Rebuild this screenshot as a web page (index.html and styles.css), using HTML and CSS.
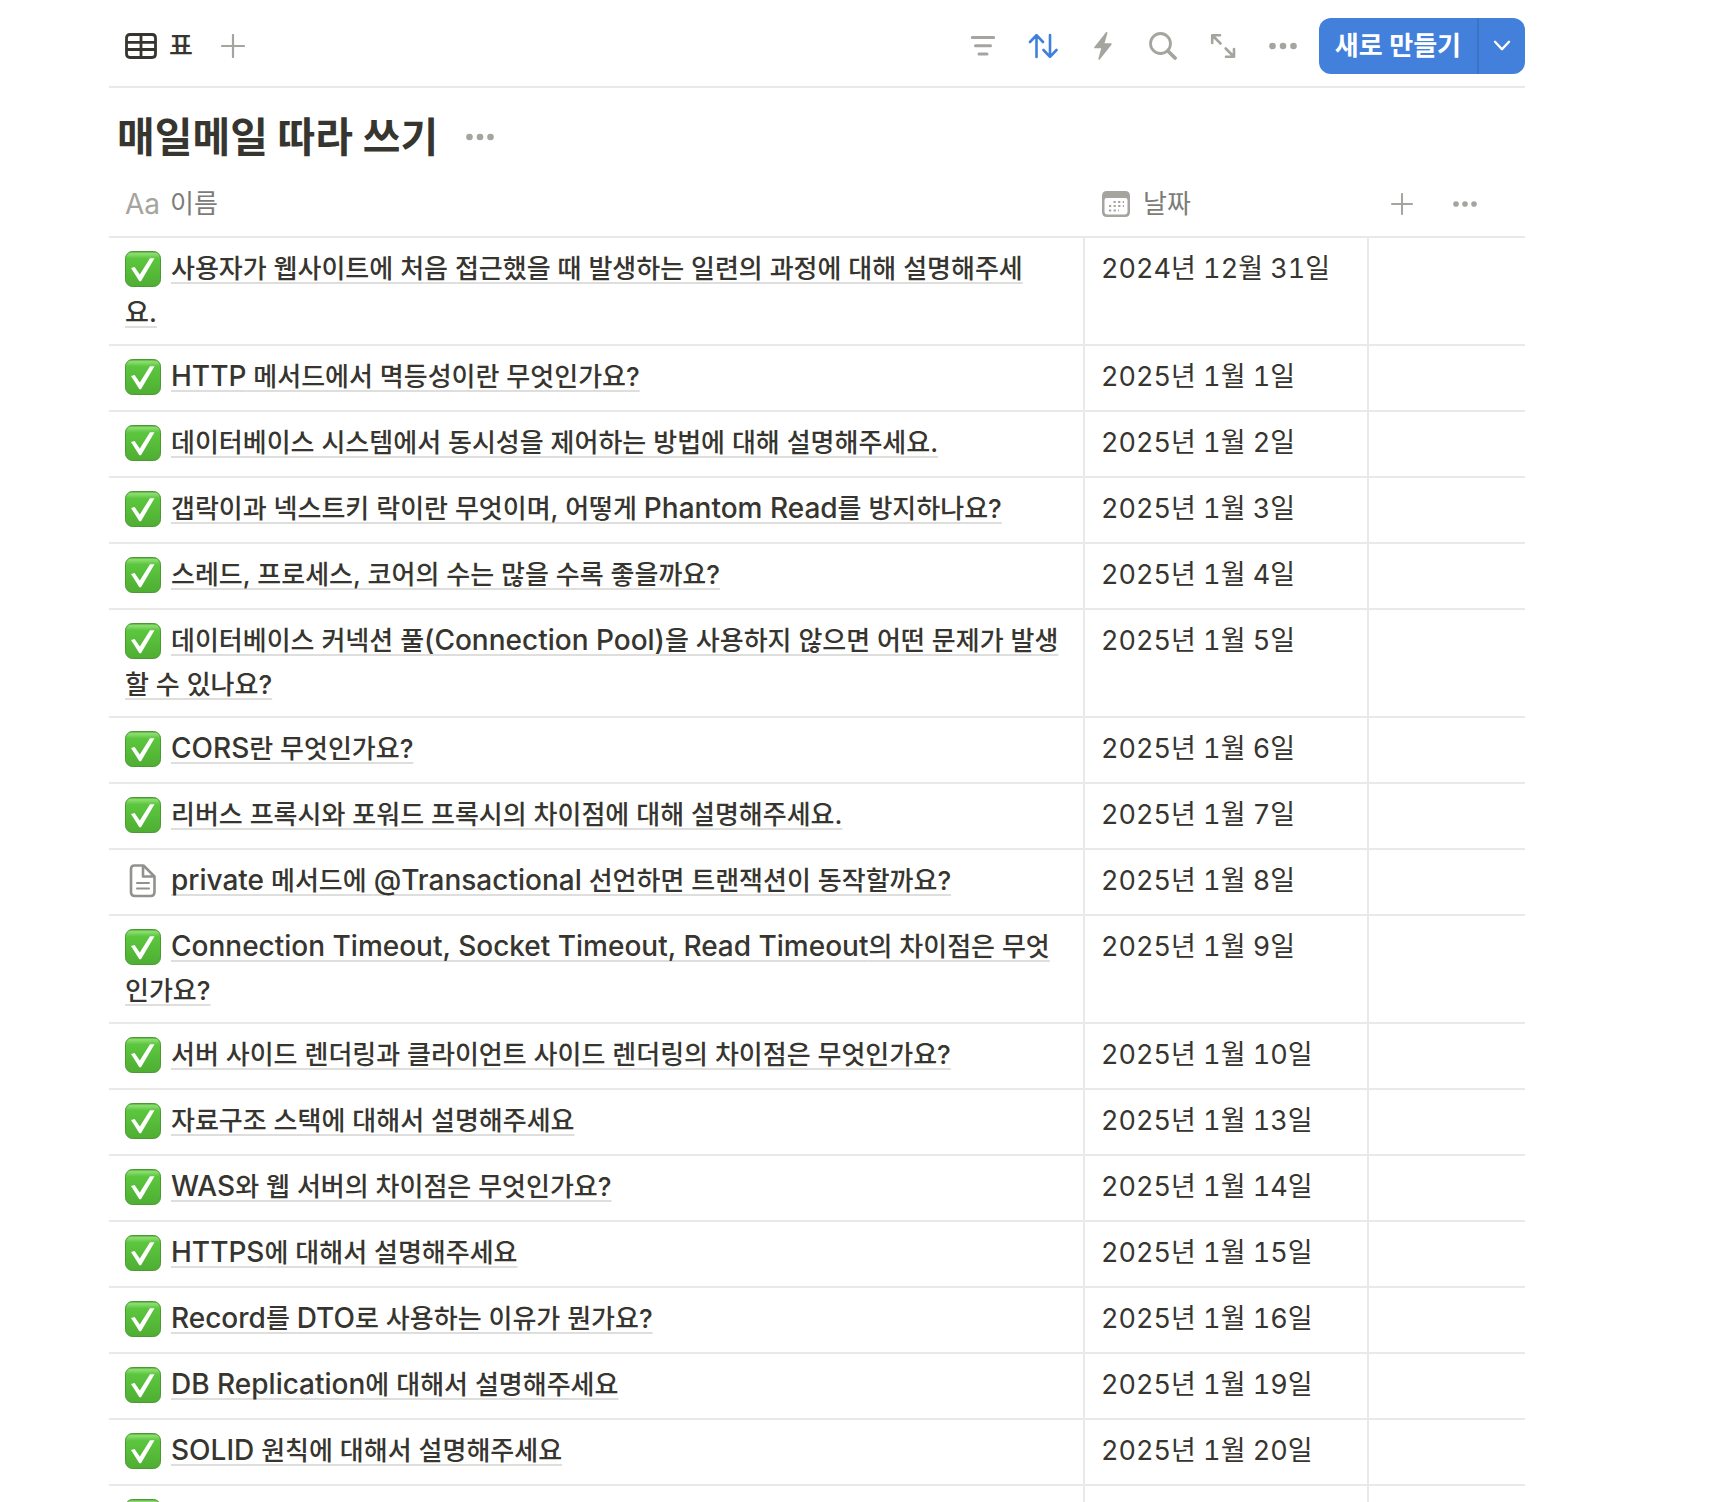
FILE: index.html
```html
<!DOCTYPE html>
<html lang="ko">
<head>
<meta charset="UTF-8">
<meta name="viewport" content="width=device-width, initial-scale=1">
<title>매일메일 따라 쓰기</title>
<link rel="stylesheet" href="styles.css">
</head>
<body>
<svg class="sprite" width="0" height="0" aria-hidden="true">
	<defs>
		<linearGradient id="green" x1="0" y1="0" x2="0" y2="1">
			<stop offset="0" stop-color="#48a833"/>
			<stop offset="0.06" stop-color="#8ede72"/>
			<stop offset="0.2" stop-color="#5cc63e"/>
			<stop offset="1" stop-color="#4fae33"/>
		</linearGradient>
	</defs>
	<symbol id="check" viewBox="0 0 36 36">
		<rect x="0.5" y="0.5" width="35" height="35" rx="7" fill="url(#green)" stroke="#489a31"/>
		<path d="M6 17 L9.6 16 L14.8 23.4 L25 7.2 L29.5 7.2 L16 30.2 L14.4 30.2 Z" fill="#fff"/>
	</symbol>
	<symbol id="page" viewBox="0 0 36 36">
		<path d="M9.5 2.5 H18.5 L29.5 13.5 V29 Q29.5 33 25.5 33 H10 Q6 33 6 29 V6 Q6 2.5 9.5 2.5 Z M18 3 V13.5 H29" fill="none" stroke="#91918e" stroke-width="2.6" stroke-linejoin="round"/>
		<path d="M12 20 H24 M12 25.5 H24" fill="none" stroke="#91918e" stroke-width="2" stroke-linecap="round"/>
	</symbol>
	<symbol id="plus" viewBox="0 0 24 24">
		<path d="M12 1 V23 M1 12 H23" fill="none" stroke="currentColor" stroke-width="2.2" stroke-linecap="round"/>
	</symbol>
	<symbol id="dots" viewBox="0 0 28 28">
		<circle cx="3.5" cy="14" r="3.3" fill="currentColor"/>
		<circle cx="14" cy="14" r="3.3" fill="currentColor"/>
		<circle cx="24.5" cy="14" r="3.3" fill="currentColor"/>
	</symbol>
</svg>
<main class="database">
	<div class="toolbar">
		<button class="tab" type="button">
			<svg width="32" height="26" viewBox="0 0 32 26"><path d="M5 1.5 H27 Q30.5 1.5 30.5 5 V21 Q30.5 24.5 27 24.5 H5 Q1.5 24.5 1.5 21 V5 Q1.5 1.5 5 1.5 Z M2 9.3 H30 M2 16.5 H30 M16 2 V24" fill="none" stroke="currentColor" stroke-width="2.8"/></svg>
			<span>표</span>
		</button>
		<button class="add-view" type="button" aria-label="보기 추가"><svg width="24" height="24"><use href="#plus"/></svg></button>
		<div class="tools">
			<button class="tool" type="button" aria-label="필터">
				<svg width="28" height="28" viewBox="0 0 28 28"><path d="M3.3 5.5 H24.7 M6.5 13.8 H21.5 M10 22 H18" fill="none" stroke="currentColor" stroke-width="3" stroke-linecap="round"/></svg>
			</button>
			<button class="tool active" type="button" aria-label="정렬">
				<svg width="30" height="28" viewBox="0 0 30 28"><path d="M8.5 25 V3.5 M2 10 L8.5 3.2 L15 10 M22 3 V24.5 M15.5 18 L22 24.8 L28.5 18" fill="none" stroke="currentColor" stroke-width="2.6" stroke-linecap="round" stroke-linejoin="round"/></svg>
			</button>
			<button class="tool" type="button" aria-label="자동화">
				<svg width="28" height="28" viewBox="0 0 28 28"><path d="M17 0.3 L5.2 15.2 Q4.8 16.3 6 16.3 H12.2 L9.3 27 Q9.5 28.2 10.8 27.4 L22.6 12.5 Q23 11.2 21.8 11.2 H15.5 L18.5 1 Q18.3 -0.3 17 0.3 Z" fill="currentColor"/></svg>
			</button>
			<button class="tool" type="button" aria-label="검색">
				<svg width="28" height="28" viewBox="0 0 28 28"><circle cx="11.5" cy="11.5" r="10" fill="none" stroke="currentColor" stroke-width="2.8"/><path d="M19 19 L26 26" fill="none" stroke="currentColor" stroke-width="3.8" stroke-linecap="round"/></svg>
			</button>
			<button class="tool" type="button" aria-label="전체 페이지로 열기">
				<svg width="28" height="28" viewBox="0 0 28 28"><path d="M3.2 11 V3.2 H11 M3.5 3.5 L11.5 11.5 M25 17 V24.8 H17 M24.7 24.5 L16.7 16.5" fill="none" stroke="currentColor" stroke-width="2.6" stroke-linecap="round" stroke-linejoin="round"/></svg>
			</button>
			<button class="tool" type="button" aria-label="더 보기"><svg width="28" height="28"><use href="#dots"/></svg></button>
		</div>
		<div class="create">
			<button class="create-main" type="button">새로 만들기</button>
			<button class="create-more" type="button" aria-label="템플릿 선택">
				<svg width="18" height="12" viewBox="0 0 18 12"><path d="M2 1.8 L9 9.2 L16 1.8" fill="none" stroke="currentColor" stroke-width="2.4" stroke-linecap="round" stroke-linejoin="round"/></svg>
			</button>
		</div>
	</div>

	<div class="heading">
		<h1>매일메일 따라 쓰기</h1>
		<button class="plain" type="button" aria-label="제목 메뉴"><svg width="28" height="28"><use href="#dots"/></svg></button>
	</div>

	<table class="grid">
		<colgroup>
			<col>
			<col class="col-date">
			<col class="col-extra">
		</colgroup>
		<thead>
			<tr>
				<th scope="col"><div class="label"><span class="aa">Aa</span><span>이름</span></div></th>
				<th scope="col">
					<div class="label">
						<svg width="32" height="26" viewBox="-1 0 32 26">
							<path d="M5 0 H23 Q28 0 28 5 V21 Q28 26 23 26 H5 Q0 26 0 21 V5 Q0 0 5 0 Z M2.5 9 V20.5 Q2.5 23.5 5.5 23.5 H22.5 Q25.5 23.5 25.5 20.5 V9 Q25.5 7 23.5 7 H4.5 Q2.5 7 2.5 9 Z" fill="#a5a49f" fill-rule="evenodd"/>
							<path d="M11.5 11 H22 M7 15 H22 M7 19.5 H17" fill="none" stroke="#a5a49f" stroke-width="2.2" stroke-dasharray="2.2 2.4"/>
						</svg>
						<span>날짜</span>
					</div>
				</th>
				<td>
					<div class="column-tools">
						<button class="plain" type="button" aria-label="속성 추가"><svg width="22" height="22"><use href="#plus"/></svg></button>
						<button class="plain" type="button" aria-label="속성 메뉴"><svg width="24" height="24"><use href="#dots"/></svg></button>
					</div>
				</td>
			</tr>
		</thead>
		<tbody>
			<tr><td><svg class="icon"><use href="#check"/></svg><a href="#">사용자가 웹사이트에 처음 접근했을 때 발생하는 일련의 과정에 대해 설명해주세<br>요.</a></td><td>2024년 12월 31일</td><td></td></tr>
			<tr><td><svg class="icon"><use href="#check"/></svg><a href="#"><span class="en">HTTP</span> 메서드에서 멱등성이란 무엇인가요?</a></td><td>2025년 1월 1일</td><td></td></tr>
			<tr><td><svg class="icon"><use href="#check"/></svg><a href="#">데이터베이스 시스템에서 동시성을 제어하는 방법에 대해 설명해주세요.</a></td><td>2025년 1월 2일</td><td></td></tr>
			<tr><td><svg class="icon"><use href="#check"/></svg><a href="#">갭락이과 넥스트키 락이란 무엇이며, 어떻게 <span class="en">Phantom Read</span>를 방지하나요?</a></td><td>2025년 1월 3일</td><td></td></tr>
			<tr><td><svg class="icon"><use href="#check"/></svg><a href="#">스레드, 프로세스, 코어의 수는 많을 수록 좋을까요?</a></td><td>2025년 1월 4일</td><td></td></tr>
			<tr><td><svg class="icon"><use href="#check"/></svg><a href="#">데이터베이스 커넥션 풀<span class="en">(Connection Pool)</span>을 사용하지 않으면 어떤 문제가 발생<br>할 수 있나요?</a></td><td>2025년 1월 5일</td><td></td></tr>
			<tr><td><svg class="icon"><use href="#check"/></svg><a href="#"><span class="en">CORS</span>란 무엇인가요?</a></td><td>2025년 1월 6일</td><td></td></tr>
			<tr><td><svg class="icon"><use href="#check"/></svg><a href="#">리버스 프록시와 포워드 프록시의 차이점에 대해 설명해주세요.</a></td><td>2025년 1월 7일</td><td></td></tr>
			<tr><td><svg class="icon"><use href="#page"/></svg><a href="#"><span class="en">private</span> 메서드에 <span class="en">@Transactional</span> 선언하면 트랜잭션이 동작할까요?</a></td><td>2025년 1월 8일</td><td></td></tr>
			<tr><td><svg class="icon"><use href="#check"/></svg><a href="#"><span class="en">Connection Timeout, Socket Timeout, Read Timeout</span>의 차이점은 무엇<br>인가요?</a></td><td>2025년 1월 9일</td><td></td></tr>
			<tr><td><svg class="icon"><use href="#check"/></svg><a href="#">서버 사이드 렌더링과 클라이언트 사이드 렌더링의 차이점은 무엇인가요?</a></td><td>2025년 1월 10일</td><td></td></tr>
			<tr><td><svg class="icon"><use href="#check"/></svg><a href="#">자료구조 스택에 대해서 설명해주세요</a></td><td>2025년 1월 13일</td><td></td></tr>
			<tr><td><svg class="icon"><use href="#check"/></svg><a href="#"><span class="en">WAS</span>와 웹 서버의 차이점은 무엇인가요?</a></td><td>2025년 1월 14일</td><td></td></tr>
			<tr><td><svg class="icon"><use href="#check"/></svg><a href="#"><span class="en">HTTPS</span>에 대해서 설명해주세요</a></td><td>2025년 1월 15일</td><td></td></tr>
			<tr><td><svg class="icon"><use href="#check"/></svg><a href="#"><span class="en">Record</span>를 <span class="en">DTO</span>로 사용하는 이유가 뭔가요?</a></td><td>2025년 1월 16일</td><td></td></tr>
			<tr><td><svg class="icon"><use href="#check"/></svg><a href="#"><span class="en">DB Replication</span>에 대해서 설명해주세요</a></td><td>2025년 1월 19일</td><td></td></tr>
			<tr><td><svg class="icon"><use href="#check"/></svg><a href="#"><span class="en">SOLID</span> 원칙에 대해서 설명해주세요</a></td><td>2025년 1월 20일</td><td></td></tr>
			<tr><td><svg class="icon"><use href="#check"/></svg></td><td></td><td></td></tr>
		</tbody>
	</table>
</main>
</body>
</html>
```

FILE: styles.css
```css
* {
	box-sizing: border-box;
}

body {
	margin: 0;
	background: #fff;
	color: #37352f;
	font-family: Inter, "Noto Sans CJK KR", sans-serif;
	font-size: 26px;
	line-height: 44px;
}

button {
	display: flex;
	align-items: center;
	justify-content: center;
	padding: 0;
	border: 0;
	background: none;
	color: #a5a49f;
	font: inherit;
	cursor: pointer;
}

.sprite {
	position: absolute;
}

.database {
	height: 100vh;
	padding: 0 207px 0 109px;
	overflow: hidden;
}

/* view tabs and tools */
.toolbar {
	display: flex;
	align-items: center;
	height: 88px;
	padding: 6px 0 0 16px;
	border-bottom: 2px solid #e9e9e7;
}

.tab {
	gap: 12px;
	color: #37352f;
	font-weight: 500;
}

.add-view {
	margin-left: 28px;
}

.tools {
	display: flex;
	margin-left: auto;
}

.tool {
	width: 60px;
	height: 56px;
}

.tool.active {
	color: #3f80dd;
}

.create {
	display: flex;
	height: 56px;
	margin-left: 6px;
	border-radius: 12px;
	background: #4380dc;
	overflow: hidden;
}

.create button {
	color: #fff;
}

.create-main {
	padding: 0 16px;
	font-weight: 600;
}

.create .create-more {
	width: 48px;
	border-left: 2px solid #3b73c5;
}

/* title */
.heading {
	display: flex;
	align-items: center;
	gap: 28px;
	padding: 14px 8px 0;
}

h1 {
	margin: 0;
	font-size: 41px;
	font-weight: 700;
	line-height: 70px;
}

/* table */
.grid {
	width: 100%;
	table-layout: fixed;
	border-collapse: separate;
	border-spacing: 0;
}

.col-date {
	width: 284px;
}

.col-extra {
	width: 156px;
}

.grid th,
.grid td {
	height: 66px;
	padding: 9px 16px;
	border-bottom: 2px solid #e9e9e7;
	text-align: left;
	vertical-align: top;
}

.grid thead th,
.grid thead td {
	padding-top: 10px;
	padding-bottom: 8px;
	color: #7d7c78;
	font-weight: 400;
}

.grid tbody td {
	border-right: 2px solid #e9e9e7;
}

.grid tbody td:nth-child(2) {
	font-size: 27px;
	font-variant-numeric: tabular-nums;
}

.grid tbody td:last-child {
	border-right: 0;
}

.label {
	display: flex;
	align-items: center;
	gap: 10px;
}

.aa {
	color: #a5a49f;
	font-size: 28px;
}

.column-tools {
	display: flex;
	align-items: center;
	gap: 40px;
	height: 44px;
	padding-left: 6px;
}

.icon {
	width: 36px;
	height: 36px;
	margin-right: 10px;
	vertical-align: -9px;
}

.grid a {
	color: inherit;
	font-weight: 500;
	text-decoration: underline #dededc 2px;
	text-underline-offset: 4px;
	text-decoration-skip-ink: none;
}

/* latin words run a little larger than the hangul */
.en {
	font-size: 28px;
	line-height: 40px;
}
```
